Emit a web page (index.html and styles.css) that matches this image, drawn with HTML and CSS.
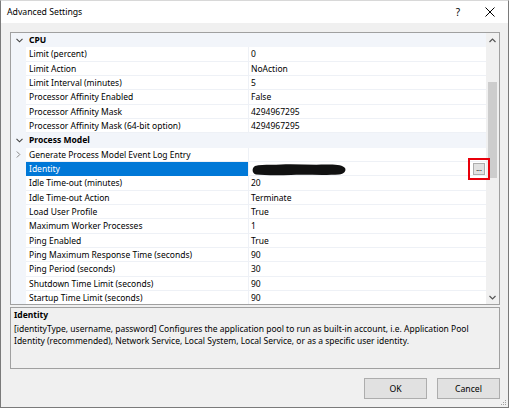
FILE: index.html
```html
<!DOCTYPE html>
<html>
<head>
<meta charset="utf-8">
<link rel="stylesheet" href="styles.css">
</head>
<body>
<div class="window">
  <div class="titlebar">
    <span class="title">Advanced Settings</span>
    <span class="tb-help">?</span>
    <span class="tb-close"><svg width="10" height="10" viewBox="0 0 10 10"><path d="M0.5 0.5 L9.5 9.5 M9.5 0.5 L0.5 9.5" stroke="#000" stroke-width="1" fill="none"/></svg></span>
  </div>
  <div class="content">
    <div class="grid">
      <div class="rows">
        <div class="row cat"><span class="gut"><svg class="chev" width="7" height="5" viewBox="0 0 7 5"><path d="M0.5 0.8 L3.5 3.8 L6.5 0.8" stroke="#444" stroke-width="1.1" fill="none"/></svg></span><span class="catname">CPU</span></div>
        <div class="row"><span class="gut"></span><span class="name">Limit (percent)</span><span class="val">0</span></div>
        <div class="row"><span class="gut"></span><span class="name">Limit Action</span><span class="val">NoAction</span></div>
        <div class="row"><span class="gut"></span><span class="name">Limit Interval (minutes)</span><span class="val">5</span></div>
        <div class="row"><span class="gut"></span><span class="name">Processor Affinity Enabled</span><span class="val">False</span></div>
        <div class="row"><span class="gut"></span><span class="name">Processor Affinity Mask</span><span class="val">4294967295</span></div>
        <div class="row"><span class="gut"></span><span class="name">Processor Affinity Mask (64-bit option)</span><span class="val">4294967295</span></div>
        <div class="row cat"><span class="gut"><svg class="chev" width="7" height="5" viewBox="0 0 7 5"><path d="M0.5 0.8 L3.5 3.8 L6.5 0.8" stroke="#444" stroke-width="1.1" fill="none"/></svg></span><span class="catname">Process Model</span></div>
        <div class="row"><span class="gut"><svg class="chev-r" width="5" height="7" viewBox="0 0 5 7"><path d="M0.8 0.5 L3.8 3.5 L0.8 6.5" stroke="#888" stroke-width="1" fill="none"/></svg></span><span class="name">Generate Process Model Event Log Entry</span><span class="val"></span></div>
        <div class="row sel"><span class="gut"></span><span class="name">Identity</span><span class="val">
          <svg class="scribble" width="96" height="13" viewBox="0 0 96 13"><path d="M4 3 C10 1 20 2 30 1.5 C45 1 60 2 75 1.5 C85 1.2 92 2 94 5 C95.5 8 93 11 88 11.5 C75 12.5 55 11.5 40 12 C25 12.5 12 12.2 5 11.5 C1 10.5 0.5 5 4 3 Z" fill="#111"/></svg>
          <span class="ellipsis">...</span>
        </span></div>
        <div class="row"><span class="gut"></span><span class="name">Idle Time-out (minutes)</span><span class="val">20</span></div>
        <div class="row"><span class="gut"></span><span class="name">Idle Time-out Action</span><span class="val">Terminate</span></div>
        <div class="row"><span class="gut"></span><span class="name">Load User Profile</span><span class="val">True</span></div>
        <div class="row"><span class="gut"></span><span class="name">Maximum Worker Processes</span><span class="val">1</span></div>
        <div class="row"><span class="gut"></span><span class="name">Ping Enabled</span><span class="val">True</span></div>
        <div class="row"><span class="gut"></span><span class="name">Ping Maximum Response Time (seconds)</span><span class="val">90</span></div>
        <div class="row"><span class="gut"></span><span class="name">Ping Period (seconds)</span><span class="val">30</span></div>
        <div class="row"><span class="gut"></span><span class="name">Shutdown Time Limit (seconds)</span><span class="val">90</span></div>
        <div class="row"><span class="gut"></span><span class="name">Startup Time Limit (seconds)</span><span class="val">90</span></div>
      </div>
      <div class="scrollbar">
        <div class="sb-arrow"><svg width="7" height="5" viewBox="0 0 7 5"><path d="M0.5 4 L3.5 1 L6.5 4" stroke="#555" stroke-width="1.2" fill="none"/></svg></div>
        <div class="sb-track"><div class="sb-thumb"></div></div>
        <div class="sb-arrow"><svg width="7" height="5" viewBox="0 0 7 5"><path d="M0.5 1 L3.5 4 L6.5 1" stroke="#555" stroke-width="1.2" fill="none"/></svg></div>
      </div>
      <div class="annot"></div>
    </div>
    <div class="desc">
      <div class="desc-title">Identity</div>
      <div class="desc-text">[identityType, username, password] Configures the application pool to run as built-in account, i.e. Application Pool Identity (recommended), Network Service, Local System, Local Service, or as a specific user identity.</div>
    </div>
    <div class="buttons">
      <button class="btn">OK</button>
      <button class="btn">Cancel</button>
    </div>
  </div>
  <svg class="grip" width="7" height="7" viewBox="0 0 7 7"><g fill="#a0a0a0"><rect x="5" y="1" width="1" height="1"/><rect x="3" y="3" width="1" height="1"/><rect x="5" y="3" width="1" height="1"/><rect x="1" y="5" width="1" height="1"/><rect x="3" y="5" width="1" height="1"/><rect x="5" y="5" width="1" height="1"/></g></svg>
</div>
</body>
</html>
```
FILE: styles.css
```css
html, body {
  margin: 0;
  padding: 0;
  background: #ffffff;
}
.window {
  position: relative;
  width: 509px;
  height: 408px;
  box-sizing: border-box;
  border: 1px solid #7a7a7a;
  border-top-color: #d8d8d8;
  background: #f0f0f0;
  display: flex;
  flex-direction: column;
  font-family: "Noto Sans", "Open Sans", sans-serif;
  font-size: 8.5px;
  color: #000;
}
.titlebar {
  height: 22px;
  background: #ffffff;
  display: flex;
  align-items: center;
  padding-left: 6px;
  flex-shrink: 0;
}
.title {
  font-size: 8.7px;
  flex: 1;
}
.tb-help {
  font-size: 10px;
  width: 12px;
  margin-right: 21px;
  text-align: center;
}
.tb-close {
  display: flex;
  width: 10px;
  margin-right: 13px;
}
.content {
  flex: 1;
  display: flex;
  flex-direction: column;
  padding: 9px 8px 0 9px;
}
.grid {
  position: relative;
  height: 273px;
  box-sizing: border-box;
  border: 1px solid #a0a0a0;
  background: #ffffff;
  display: flex;
  overflow: hidden;
  flex-shrink: 0;
}
.rows {
  flex: 1;
  display: flex;
  flex-direction: column;
  overflow: hidden;
}
.row {
  height: 14.333px;
  flex-shrink: 0;
  display: grid;
  grid-template-columns: 15px 222px 1fr;
  line-height: 13.333px;
  white-space: nowrap;
}
.gut {
  background: #f2f5fa;
  display: flex;
  align-items: center;
  justify-content: center;
}
.name {
  padding-left: 3px;
  border-bottom: 1px solid #eef1f6;
  overflow: hidden;
}
.val {
  position: relative;
  padding-left: 2px;
  border-left: 1px solid #eef1f6;
  border-bottom: 1px solid #eef1f6;
}
.cat {
  background: #f2f5fa;
  grid-template-columns: 15px 1fr;
}
.catname {
  padding-left: 3px;
  font-weight: bold;
}
.chev {
  margin-left: 1px;
}
.chev-r {
  margin-left: -1px;
}
.sel .name {
  background: #0078d7;
  color: #ffffff;
  border-bottom-color: #0078d7;
}
.scribble {
  position: absolute;
  left: 2px;
  top: 1px;
}
.ellipsis {
  position: absolute;
  right: 1px;
  top: 1px;
  width: 10px;
  height: 10px;
  border: 1px solid #adadad;
  background: #e1e1e1;
  font-size: 7px;
  line-height: 9px;
  text-align: center;
  color: #000;
}
.scrollbar {
  width: 13px;
  background: #f0f0f0;
  display: flex;
  flex-direction: column;
  flex-shrink: 0;
}
.sb-arrow {
  height: 14px;
  display: flex;
  align-items: center;
  justify-content: center;
  flex-shrink: 0;
}
.sb-track {
  flex: 1;
  display: flex;
  flex-direction: column;
  align-items: center;
}
.sb-thumb {
  margin-top: 35px;
  width: 9px;
  height: 96px;
  background: #cdcdcd;
}
.annot {
  position: absolute;
  left: 457px;
  top: 125px;
  width: 18px;
  height: 18px;
  border: 2px solid #e8000b;
}
.desc {
  margin-top: 2px;
  height: 62px;
  box-sizing: border-box;
  border: 1px solid #a0a0a0;
  padding: 1px 3px 0 3px;
  flex-shrink: 0;
}
.desc-title {
  font-weight: bold;
  line-height: 12px;
}
.desc-text {
  margin-top: 2px;
  line-height: 11.5px;
}
.buttons {
  margin-top: 9px;
  display: flex;
  justify-content: flex-end;
  gap: 10px;
}
.btn {
  width: 63px;
  height: 21px;
  box-sizing: border-box;
  background: #e1e1e1;
  border: 1px solid #adadad;
  font-family: "Noto Sans", "Open Sans", sans-serif;
  font-size: 8.7px;
  color: #000;
  padding: 0;
  margin: 0;
}
.grip {
  position: absolute;
  right: 1px;
  bottom: 1px;
}
```
